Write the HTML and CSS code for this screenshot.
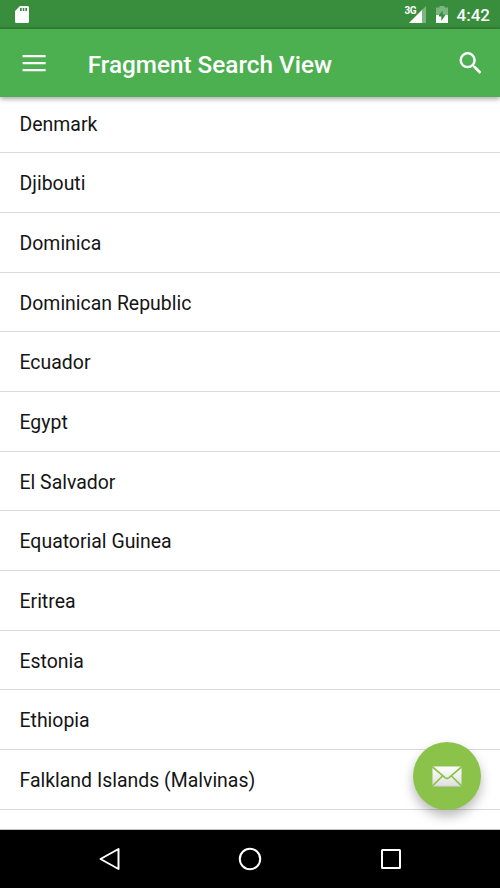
FILE: index.html
```html
<!DOCTYPE html>
<html lang="en">
<head>
<meta charset="utf-8">
<title>Fragment Search View</title>
<link rel="stylesheet" href="styles.css">
</head>
<body>
<div class="screen">
  <header class="status">
    <svg class="sd" width="14" height="17" viewBox="0 0 14 17"><path fill="#fff" fill-rule="evenodd" d="M5 0h7.500Q14 0 14 1.500v14Q14 17 12.500 17h-11Q0 17 0 15.500V5zM5 2v3h1.700V2zm2.700 0v3h1.600V2zm2.600 0v3H12V2z"/></svg>
    <div class="signals">
      <span class="network">3G</span>
      <svg class="signal" width="17" height="17" viewBox="0 0 17 17"><path fill="#fff" opacity=".35" d="M17 0v17H0z"/><path fill="#fff" d="M13 4v13H0z"/></svg>
      <svg class="battery" width="12" height="17" viewBox="0 0 12 17"><path fill="#fff" opacity=".35" fill-rule="evenodd" d="M3.500 0h5v1.500H12V9H9.500L6.700 8.500V4.500L3 9H0V1.500h3.500z"/><path fill="#fff" fill-rule="evenodd" d="M0 9h3v1.500h2.300V15L9.500 9H12v8H0z"/></svg>
      <span class="time">4:42</span>
    </div>
  </header>
  <div class="toolbar">
    <svg class="menu" width="24" height="17" viewBox="0 0 24 17"><path d="M.6 1.200h23M.6 8.200h23M.6 15.200h23" stroke="#fff" stroke-width="2.300"/></svg>
    <h1 class="title">Fragment Search View</h1>
    <svg class="search" width="22" height="22" viewBox="2.600 3 17.500 17.500"><path fill="#fff" d="M15.500 14h-.79l-.28-.27A6.471 6.471 0 0 0 16 9.500 6.500 6.500 0 1 0 9.500 16c1.610 0 3.090-.59 4.230-1.570l.27.28v.79l5 4.990L20.490 19l-4.990-5zm-6 0C7.010 14 5 11.990 5 9.500S7.010 5 9.500 5 14 7.010 14 9.500 11.990 14 9.500 14z"/></svg>
  </div>
  <main class="content">
    <ul class="list">
      <li>Denmark</li>
      <li>Djibouti</li>
      <li>Dominica</li>
      <li>Dominican Republic</li>
      <li>Ecuador</li>
      <li>Egypt</li>
      <li>El Salvador</li>
      <li>Equatorial Guinea</li>
      <li>Eritrea</li>
      <li>Estonia</li>
      <li>Ethiopia</li>
      <li>Falkland Islands (Malvinas)</li>
    </ul>
    <div class="fab">
      <svg width="30" height="21" viewBox="0 0 30 21">
        <defs><linearGradient id="paper" x1="0" y1="0" x2="0" y2="1"><stop offset="0" stop-color="#fff"/><stop offset="1" stop-color="#dedede"/></linearGradient></defs>
        <rect x=".5" y=".5" width="29" height="20" rx="1" fill="url(#paper)"/>
        <path d="M.5 1L13 11.700q2 1.600 4 0L29.500 1M.5 20L10.500 10M29.500 20L19.500 10" fill="none" stroke="#8bc34a" stroke-width="1.700"/>
        <path d="M2 20.300h26" stroke="#b5b5b5" stroke-width=".6"/>
      </svg>
    </div>
  </main>
  <nav class="navigation">
    <svg width="24" height="24" viewBox="0 0 24 24"><path d="M21.500 2v20L3.500 12z"/></svg>
    <svg width="24" height="24" viewBox="0 0 24 24"><circle cx="12" cy="12" r="10.200"/></svg>
    <svg width="24" height="24" viewBox="0 0 24 24"><rect x="3" y="3" width="18" height="18" rx=".5"/></svg>
  </nav>
</div>
</body>
</html>
```
FILE: styles.css
```css
* { box-sizing: border-box; }
body { margin: 0; background: #fff; font-family: Roboto, "Liberation Sans", sans-serif; }
.screen { width: 500px; height: 888px; display: flex; flex-direction: column; overflow: hidden; }
.screen svg { display: block; flex: none; }
.status {
  height: 29px; flex: none; display: flex; justify-content: space-between;
  padding: 6px 10.500px 0 15px; background: linear-gradient(#388e3c 26px, #307a34 29px); color: #fff;
}
.signals { display: flex; align-items: flex-start; }
.network { font-size: 10px; font-weight: 700; line-height: 10px; width: 11px; margin-right: -7px; letter-spacing: -.6px; }
.battery { margin-left: 10px; }
.time { width: 33px; margin-left: 9px; font-size: 17px; font-weight: 500; line-height: 19px; white-space: nowrap; }
.toolbar {
  height: 68px; flex: none; display: flex; align-items: center; padding: 0 18.600px 0 22px;
  background: #4caf50; color: #fff; position: relative; z-index: 1;
  box-shadow: 0 2px 5px rgba(0, 0, 0, .35);
}
.title { margin: 3px auto 0 41.700px; font-size: 24.3px; font-weight: 500; line-height: 28px; white-space: nowrap; }
.content { height: 733px; flex: none; position: relative; overflow: hidden; border-bottom: 1px solid #c2c2c2; }
.list { margin: -3.400px 0 0; padding: 0; list-style: none; }
.list li {
  height: 59.680px; padding: 0 19.500px; border-bottom: 1px solid #d9d9d9;
  font-size: 19.440px; line-height: 61px; color: #151515; white-space: nowrap;
}
.fab {
  position: absolute; right: 19.400px; bottom: 18.700px; width: 68px; height: 68px; border-radius: 50%;
  display: grid; place-items: center; background: #8bc34a; box-shadow: 0 6px 12px rgba(0, 0, 0, .28);
}
.navigation {
  height: 58px; flex: none; display: flex; justify-content: space-between; align-items: center;
  padding: 0 97.300px; background: #000;
}
.navigation svg { fill: none; stroke: #fff; stroke-width: 2; stroke-linejoin: round; }
```
